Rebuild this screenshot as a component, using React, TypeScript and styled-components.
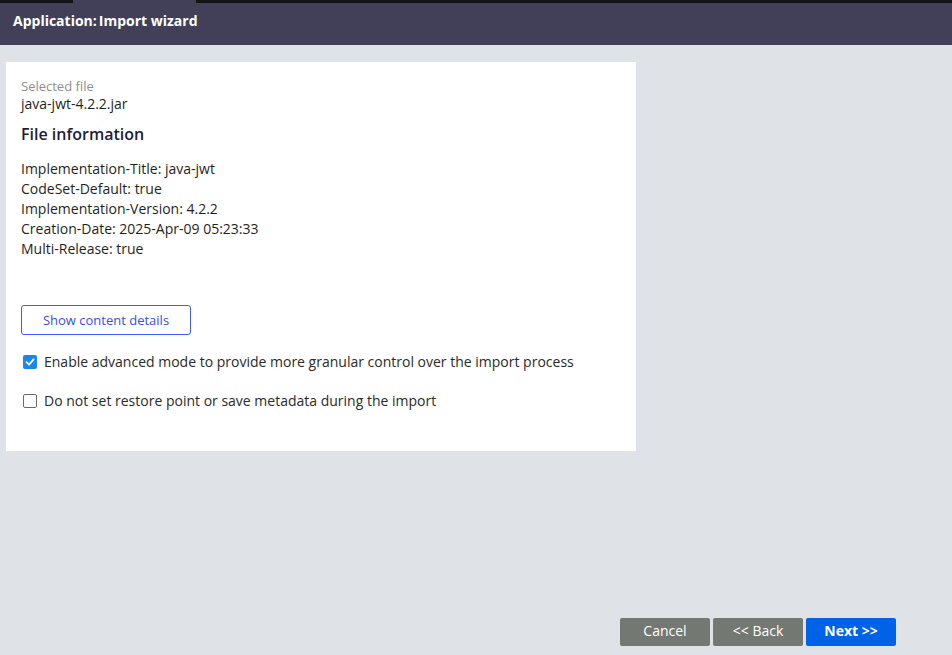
import styled, { createGlobalStyle } from 'styled-components';

const GlobalStyle = createGlobalStyle`
  html, body {
    margin: 0;
    padding: 0;
    background: #dfe2e6;
    font-family: "Open Sans", "Noto Sans", sans-serif;
  }
`;

const Page = styled.div`
  width: 952px;
  height: 655px;
  display: flex;
  flex-direction: column;
  background: #dfe2e6;
`;

const TopStrip = styled.div`
  height: 3px;
  background: #141418;
  display: flex;
`;

const ActiveTab = styled.div`
  margin-left: 73px;
  width: 123px;
  background: #424058;
`;

const Header = styled.div`
  height: 42px;
  box-sizing: border-box;
  background: #424058;
  padding: 8px 0 0 13px;
  color: #fff;
  font-size: 14px;
  line-height: 19px;
  font-weight: 700;
`;

const HeaderTitle = styled.span`
  margin-left: 2px;
`;

const Body = styled.div`
  flex: 1;
  display: flex;
  flex-direction: column;
  padding: 17px 6px 9px 6px;
`;

const Card = styled.div`
  width: 630px;
  height: 389px;
  box-sizing: border-box;
  background: #fff;
  padding: 16px 15px;
  color: #1f1f1f;
`;

const Label = styled.div`
  font-size: 13px;
  color: #8e8e8e;
  line-height: 17px;
`;

const Value = styled.div`
  font-size: 14px;
  line-height: 18px;
`;

const Heading = styled.div`
  margin-top: 10px;
  font-size: 16px;
  font-weight: 600;
  color: #1e2038;
  line-height: 22px;
`;

const InfoList = styled.div`
  margin-top: 14px;
  font-size: 14px;
  line-height: 20px;
`;

const OutlineButton = styled.button`
  margin-top: 46px;
  width: 170px;
  height: 30px;
  border: 1px solid #3d5afe;
  border-radius: 3px;
  background: #fff;
  color: #3450e0;
  font-family: inherit;
  font-size: 13px;
  padding: 0;
`;

const CheckRow = styled.label<{ $gap: number }>`
  display: flex;
  align-items: center;
  margin-top: ${({ $gap }) => $gap}px;
  font-size: 14px;
  color: #2a2a2a;
  gap: 7px;
  padding-left: 2px;
`;

const Box = styled.span<{ $checked: boolean }>`
  width: 14px;
  height: 14px;
  box-sizing: border-box;
  border-radius: 2px;
  display: inline-flex;
  align-items: center;
  justify-content: center;
  background: ${({ $checked }) => ($checked ? '#1b87e6' : '#fff')};
  border: ${({ $checked }) => ($checked ? 'none' : '1px solid #6b6b6b')};
`;

const Footer = styled.div`
  margin-top: auto;
  display: flex;
  justify-content: flex-end;
  gap: 3px;
  padding-right: 50px;
`;

const FooterButton = styled.button<{ $primary?: boolean }>`
  width: 90px;
  height: 28px;
  border: none;
  border-radius: 2px;
  font-family: inherit;
  font-size: 14px;
  line-height: 26px;
  color: #fff;
  font-weight: ${({ $primary }) => ($primary ? 700 : 400)};
  background: ${({ $primary }) => ($primary ? '#0062e6' : '#747872')};
  padding: 0 0 2px;
`;

const info = [
  'Implementation-Title: java-jwt',
  'CodeSet-Default: true',
  'Implementation-Version: 4.2.2',
  'Creation-Date: 2025-Apr-09 05:23:33',
  'Multi-Release: true',
];

const Check = ({ checked }: { checked: boolean }) => (
  <Box $checked={checked}>
    {checked && (
      <svg width="10" height="10" viewBox="0 0 10 10">
        <path d="M1.5 5.2 L4 7.6 L8.6 2.4" stroke="#fff" strokeWidth="1.8" fill="none" strokeLinecap="round" strokeLinejoin="round" />
      </svg>
    )}
  </Box>
);

const App = () => (
  <>
    <GlobalStyle />
    <Page>
      <TopStrip>
        <ActiveTab />
      </TopStrip>
      <Header>
        Application:<HeaderTitle>Import wizard</HeaderTitle>
      </Header>
      <Body>
        <Card>
          <Label>Selected file</Label>
          <Value>java-jwt-4.2.2.jar</Value>
          <Heading>File information</Heading>
          <InfoList>
            {info.map(line => (
              <div key={line}>{line}</div>
            ))}
          </InfoList>
          <OutlineButton>Show content details</OutlineButton>
          <CheckRow $gap={17}>
            <Check checked />
            Enable advanced mode to provide more granular control over the import process
          </CheckRow>
          <CheckRow $gap={20}>
            <Check checked={false} />
            Do not set restore point or save metadata during the import
          </CheckRow>
        </Card>
        <Footer>
          <FooterButton>Cancel</FooterButton>
          <FooterButton>&lt;&lt; Back</FooterButton>
          <FooterButton $primary>Next &gt;&gt;</FooterButton>
        </Footer>
      </Body>
    </Page>
  </>
);

export default App;
